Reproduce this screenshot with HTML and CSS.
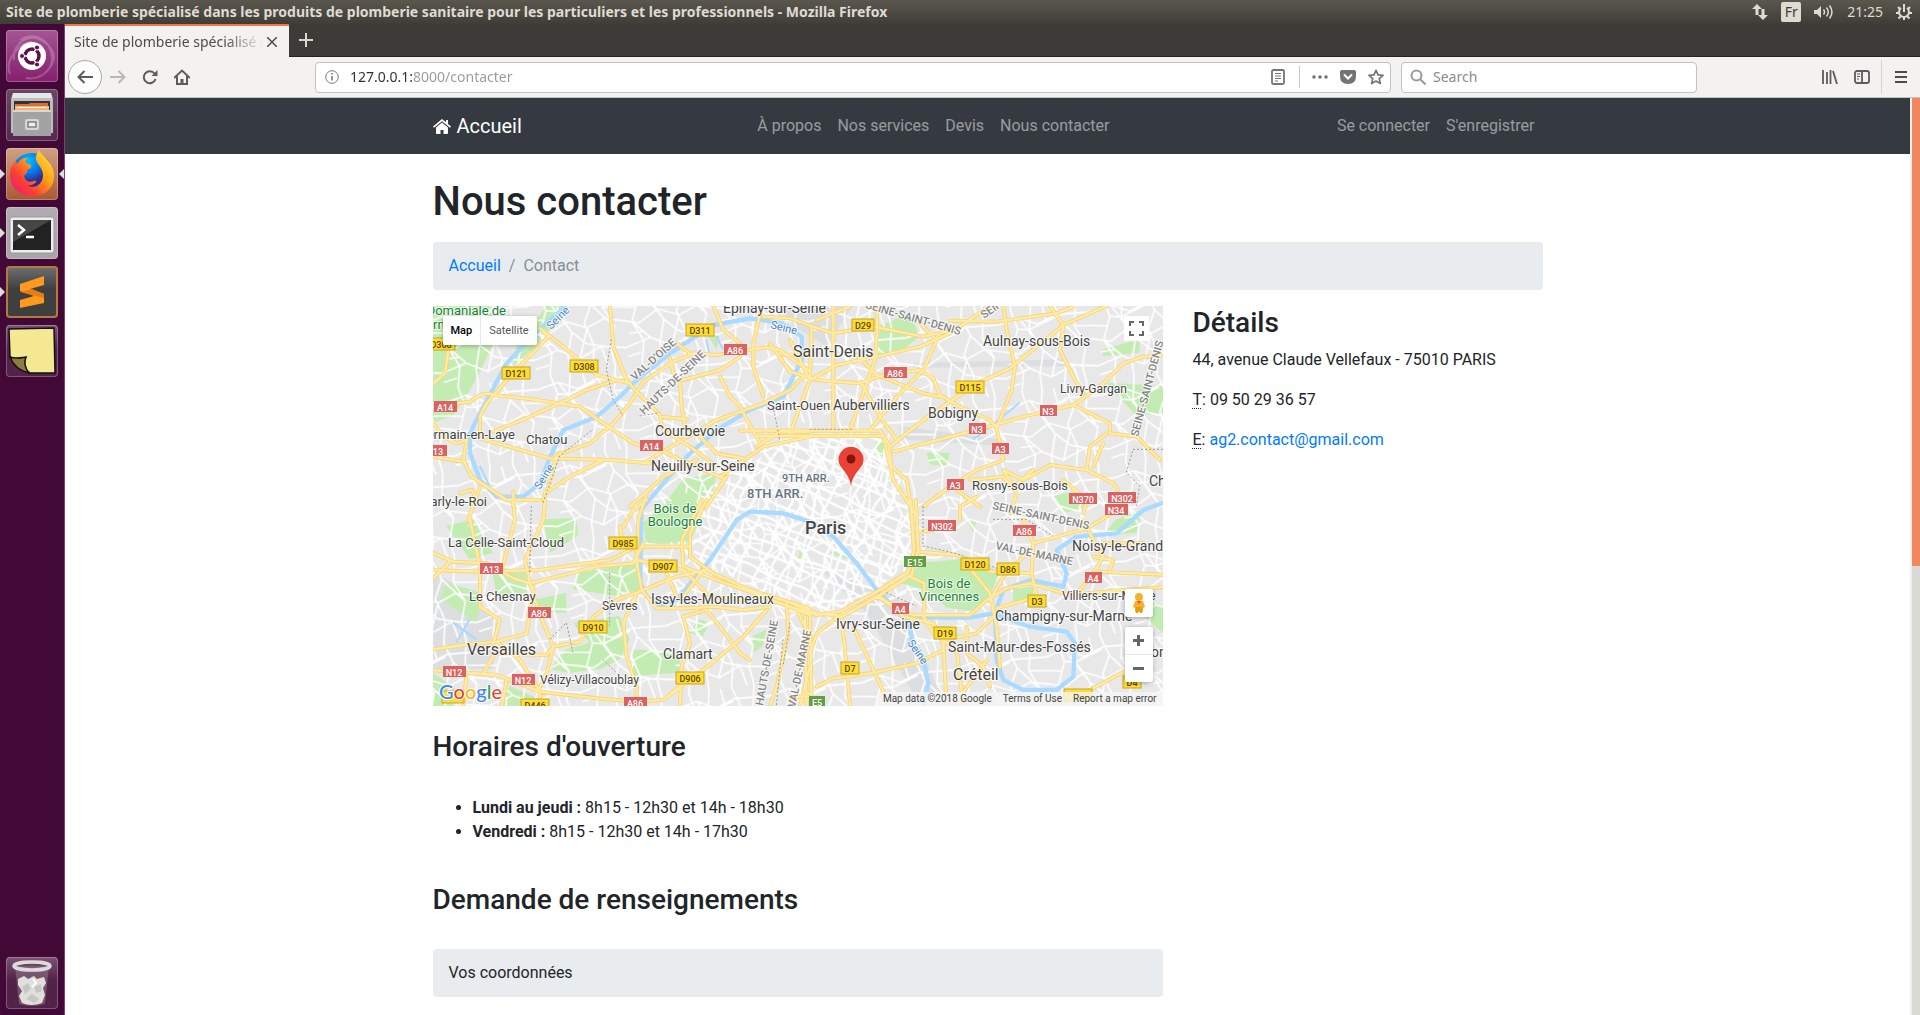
FILE: index.html
```html
<!DOCTYPE html>
<html lang="fr">
<head>
<meta charset="utf-8">
<title>Site de plomberie spécialisé dans les produits de plomberie sanitaire</title>
<link rel="stylesheet" href="styles.css">
</head>
<body>
<div class="desktop">
  <header class="panel">
    <span class="panel-title">Site de plomberie spécialisé dans les produits de plomberie sanitaire pour les particuliers et les professionnels - Mozilla Firefox</span>
    <div class="indicators">
      <svg width="16" height="16" viewBox="0 0 16 16" fill="#dfdbd2"><path d="M5 0l5 5H6.500v6h-3V5H0zM11 16l-5-5h3.500V5h3v6H16z"/></svg>
      <span class="keyboard">Fr</span>
      <svg width="20" height="16" viewBox="0 0 20 16" fill="none" stroke="#dfdbd2" stroke-width="1.500"><path d="M0 6h3l4-4v12l-4-4H0z" fill="#dfdbd2" stroke="none"/><path d="M9.500 5.500q2 2.500 0 5M12.500 3.500q3.500 4.500 0 9M15.500 1.500q5 6.500 0 13"/></svg>
      <span class="clock">21:25</span>
      <svg width="16" height="16" viewBox="0 0 16 16" fill="none" stroke="#dfdbd2" stroke-width="2"><path d="M5 4a5 5 0 1 0 6 0M8 0v8"/><path d="M2 3l2 2M14 3l-2 2M0 9h3M13 9h3M2.500 14.500l2-2M13.500 14.500l-2-2M8 13v3"/></svg>
    </div>
  </header>

  <div class="workspace">
    <nav class="launcher" aria-label="Lanceur">
      <button class="tile tile-dash" aria-label="Rechercher">
        <svg viewBox="0 0 52 52"><g fill="none" stroke="#fff" stroke-opacity=".22" stroke-width="2"><path d="M8 30C6 12 24 2 38 12s12 20 2 30M14 10c16-10 32 2 32 18S30 50 20 48M4 44C-2 30 14 12 26 12"/></g><circle cx="26" cy="26" r="14" fill="#fff"/><circle cx="26" cy="26" r="7" fill="none" stroke="#5e1147" stroke-width="3.500"/><path d="M26 26L14 26M26 26l6-11M26 26l6 11" stroke="#fff" stroke-width="1.500"/><circle cx="26" cy="26" r="5" fill="#fff"/><g fill="#5e1147" stroke="#fff"><circle cx="16" cy="26" r="2.500"/><circle cx="31" cy="17.500" r="2.500"/><circle cx="31" cy="34.500" r="2.500"/></g></svg>
      </button>
      <button class="tile tile-files" aria-label="Fichiers">
        <svg viewBox="0 0 52 52"><path d="M7 4h38l2 6v34H5V10z" fill="#bdbdbd"/><path d="M7 4h38l1 5H6z" fill="#e6e6e6"/><path d="M8 12h36v10H8z" fill="#333"/><path d="M9 15h14l1-1h18v8H9z" fill="#e06a3c"/><path d="M9 17h34v4H9z" fill="#f6b26f"/><path d="M11 18h30v1H11z" fill="#fff"/><path d="M7 21h38v26H7z" fill="#a3a3a3"/><path d="M7 21h38v2H7z" fill="#d8d8d8"/><rect x="19" y="30" width="14" height="11" rx="2" fill="#d6d6d6"/><rect x="22" y="33" width="8" height="5" fill="#eee" stroke="#555"/></svg>
      </button>
      <button class="tile tile-firefox running active" aria-label="Firefox">
        <svg viewBox="0 0 52 52"><defs><linearGradient id="fx" x1="1" y1="0" x2="0" y2="1"><stop offset="0" stop-color="#fff04d"/><stop offset=".4" stop-color="#ffa114"/><stop offset=".7" stop-color="#ff3b36"/><stop offset="1" stop-color="#e31587"/></linearGradient><radialGradient id="globe" cx=".4" cy=".2"><stop offset="0" stop-color="#00c3ff"/><stop offset=".6" stop-color="#0a70e8"/><stop offset="1" stop-color="#322a87"/></radialGradient></defs><circle cx="26" cy="26" r="21" fill="url(#globe)"/><path d="M33 2c2 6 15 11 15 26 0 12-9 20-21 20C14 48 4 40 4 27c0-6 2-11 6-14l1 3c3-5 8-7 11-6-3 2-3 4-2 5l5 2c1 2-1 4-4 5 1 3-2 4-3 6 1 5 5 7 10 5 3-1 3 1 1 2-2 2-5 3-8 2 8 5 16-1 16-10 0-9-9-12-7-19 1-3 2-4 3-6z" fill="url(#fx)"/></svg>
      </button>
      <button class="tile tile-terminal running" aria-label="Terminal">
        <svg viewBox="0 0 52 52"><rect x="4" y="10" width="44" height="36" rx="2" fill="#eee" stroke="#999"/><rect x="7" y="13" width="38" height="30" fill="#222"/><path d="M7 13h38L7 35z" fill="#464646"/><path d="M12 18l6 5-6 5M20 30h8" fill="none" stroke="#fff" stroke-width="2.500"/></svg>
      </button>
      <button class="tile tile-sublime running" aria-label="Sublime Text">
        <svg viewBox="0 0 52 52"><path d="M14 18l24-8v9l-14 4 14 5v9l-24 5v-8l14-4-14-5z" fill="#ff9a1f"/><path d="M14 26l12-3 12 5v4z" fill="#e57d12"/></svg>
      </button>
      <button class="tile tile-glass" aria-label="Notes">
        <svg viewBox="0 0 52 52"><path d="M3 4l45-1 1 45H24L4 32z" fill="#f5e892" stroke="#111" stroke-width="1.500"/><path d="M4 32c5 2 10 1 16 0-2 5-1 11 3 16C14 46 7 40 4 32z" fill="#8c7d3f" stroke="#111" stroke-width="1.500"/></svg>
      </button>
      <button class="tile tile-glass tile-last" aria-label="Corbeille">
        <svg viewBox="0 0 52 52"><path d="M9 9h34l-4 38q-13 4-26 0z" fill="#8d6f86" fill-opacity=".6"/><path d="M12 22l6-3 4 3 6-3 3 3 7-2 2 6-3 5 2 7-3 8q-11 4-20 0l-3-7 3-5-4-6z" fill="#dfe0dc"/><path d="M16 30l6-4 3 6-6 5zM28 30l7-3 1 7-6 2zM20 42l6-5 7 5-4 4z" fill="#c6c7c2"/><path d="M27 22l3 4-4 4" stroke="#fff" stroke-width="2" fill="none"/><ellipse cx="26" cy="9" rx="18" ry="4" fill="none" stroke="#dcdcdc" stroke-width="3.500"/></svg>
      </button>
    </nav>

    <div class="browser">
      <div class="tabs">
        <div class="tab"><span class="tab-title">Site de plomberie spécialisé dans</span><button class="tab-close" aria-label="Fermer"><svg width="10" height="10" viewBox="0 0 10 10" stroke="#4a4a4a" stroke-width="1.500"><path d="M0 0l10 10M10 0L0 10"/></svg></button></div>
        <button class="tab-new" aria-label="Nouvel onglet"><svg width="14" height="14" viewBox="0 0 14 14" stroke="#dad7cf" stroke-width="2"><path d="M7 0v14M0 7h14"/></svg></button>
      </div>
      <div class="toolbar">
        <button class="back" aria-label="Précédent"><svg width="16" height="14" viewBox="0 0 16 14" fill="none" stroke="#5c5c5c" stroke-width="2"><path d="M16 7H1M7.500 1L1.500 7l6 6"/></svg></button>
        <button class="tool" aria-label="Suivant"><svg width="16" height="14" viewBox="0 0 16 14" fill="none" stroke="#b9b8b6" stroke-width="2"><path d="M0 7h15M8.500 1l6 6-6 6"/></svg></button>
        <button class="tool" aria-label="Actualiser"><svg width="16" height="16" viewBox="0 0 16 16" fill="none" stroke="#5c5c5c" stroke-width="2"><path d="M13.500 10A6 6 0 1 1 12.500 4.500"/><path d="M15.500 1v6h-6z" fill="#5c5c5c" stroke="none"/></svg></button>
        <button class="tool" aria-label="Accueil"><svg width="16" height="16" viewBox="0 0 16 16" fill="none" stroke="#5c5c5c" stroke-width="2"><path d="M0 9l8-7.500L16 9M3 7v8h10V7"/><path d="M6.500 15v-5h3v5z" fill="#5c5c5c" stroke="none"/></svg></button>
        <div class="field address">
          <svg width="14" height="14" viewBox="0 0 14 14" fill="none" stroke="#7a7a7a"><circle cx="7" cy="7" r="6.300"/><path d="M7 6v4.500M7 3v1.500" stroke-width="1.600"/></svg>
          <input class="address-input" type="text" value="127.0.0.1:8000/contacter" aria-label="Adresse">
          <button class="tool-in" aria-label="Mode lecture"><svg width="14" height="16" viewBox="0 0 14 16" fill="none" stroke="#747474" stroke-width="1.800"><rect x="1" y="1" width="12" height="14" rx="1.500"/><path d="M4 4.500h6M4 7h6M4 9.500h6M4 12h3" stroke-width="1"/></svg></button>
          <span class="field-rule"></span>
          <button class="tool-in" aria-label="Actions"><svg width="16" height="4" viewBox="0 0 16 4" fill="#747474"><circle cx="2" cy="2" r="1.800"/><circle cx="8" cy="2" r="1.800"/><circle cx="14" cy="2" r="1.800"/></svg></button>
          <button class="tool-in" aria-label="Pocket"><svg width="16" height="14" viewBox="0 0 16 14"><path d="M2 0h12q2 0 2 2v4q0 8-8 8T0 6V2q0-2 2-2z" fill="#747474"/><path d="M4 4.500l4 4 4-4" fill="none" stroke="#fff" stroke-width="2"/></svg></button>
          <button class="tool-in" aria-label="Marque-page"><svg width="16" height="16" viewBox="0 0 16 16" fill="none" stroke="#747474" stroke-width="1.700" stroke-linejoin="round"><path d="M8 1.300l2 4.500 5 .5-3.700 3.300 1 4.900L8 12l-4.300 2.500 1-4.900L1 6.300l5-.5z"/></svg></button>
        </div>
        <div class="field search">
          <svg width="16" height="16" viewBox="0 0 16 16" fill="none" stroke="#9a9a9a" stroke-width="2"><circle cx="6.500" cy="6.500" r="5"/><path d="M10 10l5.500 5.500"/></svg>
          <input class="search-input" type="text" placeholder="Search" aria-label="Search">
        </div>
        <div class="toolbar-end">
          <button class="tool" aria-label="Bibliothèque"><svg width="16" height="14" viewBox="0 0 16 14" stroke="#5c5c5c" stroke-width="1.800"><path d="M1 0v14M5 2v12M8.500 0v14M11 1l4 13"/></svg></button>
          <button class="tool" aria-label="Panneau"><svg width="16" height="14" viewBox="0 0 16 14" fill="none" stroke="#5c5c5c" stroke-width="1.800"><rect x="1" y="1" width="14" height="12" rx="2"/><path d="M8 1v12"/><path d="M3 4h3M3 6.500h3M3 9h2" stroke-width="1"/></svg></button>
          <span class="toolbar-rule"></span>
          <button class="tool menu" aria-label="Menu"><svg width="12" height="12" viewBox="0 0 12 12" stroke="#4c4c4c" stroke-width="2"><path d="M0 1h12M0 6h12M0 11h12"/></svg></button>
        </div>
      </div>

      <div class="viewport">
        <div class="page">
          <nav class="navbar">
            <div class="container navbar-inner">
              <a class="brand" href="#"><svg width="18" height="15" viewBox="0 0 18 15" fill="#fff"><path d="M9 3.500l6 5V14q0 1-1 1h-3.500v-4h-3v4H4q-1 0-1-1V8.500z"/><path d="M9 0L0 7.500l1 1.200L9 2.200l8 6.500 1-1.200-3-2.500V1h-2v2.300z"/></svg><span>Accueil</span></a>
              <ul class="nav nav-main">
                <li><a href="#">À propos</a></li><li><a href="#">Nos services</a></li><li><a href="#">Devis</a></li><li><a href="#">Nous contacter</a></li>
              </ul>
              <ul class="nav">
                <li><a href="#">Se connecter</a></li><li><a href="#">S'enregistrer</a></li>
              </ul>
            </div>
          </nav>

          <main class="container">
            <h1>Nous contacter</h1>
            <ol class="breadcrumb"><li><a href="#">Accueil</a></li><li class="current">Contact</li></ol>
            <div class="row">
              <div class="col-main">
                <div class="map">
                  <svg class="map-canvas" viewBox="0 0 730 400" preserveAspectRatio="xMidYMid slice" role="img" aria-label="Paris">
                    <defs>
                      <pattern id="streets" width="410" height="370" patternUnits="userSpaceOnUse" patternTransform="rotate(-8) scale(.68)">
                        <path d="M0 60L90 40 170 80 260 50 410 60M0 180L70 200 160 150 250 190 330 160 410 180M0 300L110 270 200 320 300 280 410 300M60 0L80 90 40 190 80 280 60 370M150 0L130 100 180 200 150 300 150 370M250 0L280 90 240 170 270 270 250 370M350 0L330 110 370 200 340 290 350 370M90 40L180 200M280 90L370 200M110 270L40 190M200 320L250 190M80 90L130 100 250 60M180 200L240 260 340 290M0 120L60 130M330 110L410 120M300 280L320 370M200 0L210 70M20 240L80 240M0 340L60 330"/>
                      </pattern>
                      <pattern id="city" width="170" height="150" patternUnits="userSpaceOnUse" patternTransform="rotate(24)">
                        <path d="M0 20L60 30 170 20M0 55L80 50 170 55M0 90L50 85 120 100 170 90M0 125L90 120 170 125M25 0L20 60 35 100 25 150M60 0L65 80 55 150M95 0L90 50 105 110 95 150M135 0L130 90 140 120 135 150M20 60L90 120M90 50L150 90M60 30L25 0M105 110L150 150"/>
                      </pattern>
                      <g id="roads">
                        <g transform="translate(-9 -18)"><path d="M0 320L120 305C145 285 165 275 190 285L300 297 450 320 520 370 610 430 700 455 820 510 880 535M1140 215L1050 150 1010 142 860 165 790 160 730 185 640 245 600 310 550 370 480 430 380 465 365 530 340 600 345 620M540 18L550 140 590 240 615 270 690 345 695 380M330 85L400 140 500 225 600 250M330 85L355 110 240 230 170 310 150 350 150 400M9 370L40 410 80 430 110 420 100 480 125 530 230 600 330 600M9 470L100 485M150 415L360 475 540 480 660 490M190 395L300 350 400 305 470 270 560 240M345 580L420 530 520 480M720 175L730 220 750 250 755 320 765 380M690 350L770 358M765 380L800 400 860 460 940 475M850 18L880 90 930 130M995 18L970 130 970 200 1000 290M760 240L870 210 930 170M870 230L900 290 930 320 990 430M640 490L740 430 860 360 1000 310 1080 270 1130 220M800 480L700 530 600 620M890 530L870 560 830 620M870 530L1000 440 1140 410M980 440L1050 395 1140 395M700 390L780 440 860 500M9 250L45 220 55 150M90 580L125 570 140 600M250 575L250 620M740 130L780 160M1140 160L1060 165"/></g>
                        <g transform="translate(1071 -18)"><path d="M-80 50L0 55 70 80 130 100 250 80 400 110 470 95M-60 130L0 215 80 240 210 250 280 225 390 210 430 235 450 285 500 315 600 360 620 385M60 240L140 195 260 170 390 140 480 100 600 18M480 62L620 65 800 40 850 20M130 18L130 390M65 80L60 240 0 400M260 18L262 80 255 180 180 390M200 165L260 225 400 280 450 290M380 60L440 120 400 210 330 280 240 390M215 250L270 350 320 420M640 18L650 90 675 200 665 270 620 385 640 480 560 510 480 560 400 620M480 305L560 250 660 205M310 455L560 390 700 350 850 315 930 260 1000 190 1060 170 1140 165M300 440L400 360 480 305M850 315L960 370 960 400 1040 410 1110 480M950 400L900 440 890 510 780 495 700 540 640 510M940 430L910 500M890 510L970 550 1010 620M820 540L890 600 880 640M660 205L820 75 950 18M780 18L820 75 810 150 850 230 880 280M-150 392L270 392 295 430 305 500 350 540 365 640M-100 408L280 408 310 540 375 640M540 540L640 530 680 580 660 640M500 570L570 620M640 510L670 560 730 510M0 120L60 240M80 60L180 20"/></g>
                        <g transform="translate(-9 582)"><path d="M0 155L70 185 170 190 250 235 300 250 500 200 610 190 640 130M0 245L60 185M9 210L150 215 330 210 540 180 600 150M120 60L150 200 150 320 210 360 190 430M150 -40L115 60M250 0L255 60 215 210M345 0L340 60 285 180 300 250 315 300 340 370 370 440 350 520 325 570M0 450L100 435 200 425 270 480 330 575M190 460L350 465 370 440M200 425L290 400 310 260M0 510L200 525 330 575 500 595 620 605 700 600 760 550M370 440L450 425 490 350 560 300 640 270 740 230 830 210M650 -20L625 60 620 190 635 270 680 325 770 325 850 320M620 180L760 210 840 290 950 300M710 220L740 290M830 0L780 100 780 170 850 220 960 270 1140 325M815 0L755 120 760 200 860 240 1000 290 1140 345M780 140L640 140M610 300L580 370 590 470 620 560 620 618M620 280L610 310M760 350L830 330 870 380 930 460 960 480M760 350L780 430 755 500 750 618M1010 330L940 410 820 510 700 600M1070 310L1075 400 1040 560 1020 618M1100 330L1120 370 1140 400M110 520L100 618M160 520L190 470M230 540L215 618M330 575L330 618M580 80L610 30 650 0M570 80L580 140 620 150M820 210L760 290M850 320L940 330 1020 320M1140 500L1110 618"/></g>
                        <g transform="translate(1071 582)"><path d="M362 0L372 150 355 215 260 275 150 335 80 345 0 320M377 0L385 150 365 225 270 285 160 348 80 340 0 308M260 290L370 345 540 345 590 300 650 265 720 250 840 285 1000 270 1140 260M360 230L403 250 403 350M385 155L500 165 600 215 720 220M390 95L430 90M510 60L510 20 560 -10M700 60L730 130 725 220 740 290M730 130L890 85 1000 20M880 60L910 120 940 170 910 220 870 270M930 215L1140 225M910 170L970 180 960 210M940 130L1060 130M540 205L600 280 620 380 630 500M600 300L640 230 720 150M620 325L740 290M270 290L340 350 430 370 460 430 470 618M400 350L430 400 500 450 520 618M460 420L560 400 610 350M80 560L130 535 240 520 380 490 460 450M60 340L65 618M45 350L50 618M155 350L170 500 180 618M190 380L250 510 300 618M150 345L80 400 60 460M0 600L60 580M530 380L530 460 580 500 600 560M590 480L490 618M800 618L900 570 1000 515 1060 540"/></g>
                      </g>
                    </defs>
                    <g transform="scale(.33333)">
                      <rect class="land" width="2190" height="1200"/>
                      <g class="airfield"><path d="M0 800L60 830 150 900 200 960 180 1090 0 1090z"/><path d="M1040 0L1260 0 1180 120 1080 60zM1440 170L1900 160 1900 180 1440 185zM1400 360L1700 400 1700 420 1400 400zM1150 780L1400 880 1520 1160 1440 1160 1300 920z"/></g>
                      <g class="park">
                        <path d="M0 0H170L190 90 140 200 100 270 60 330 0 350zM340 0H410L300 130 240 180 250 120z"/>
                        <path d="M1340 60L1430 20 1460 90 1400 140 1335 145zM2010 130L2120 100 2120 140 2010 150zM2020 230L2190 240 2190 320 2110 330zM1480 440L1550 440 1540 480 1490 475zM1330 400L1370 410 1370 460 1325 440zM1850 570L1910 560 1960 600 1900 620zM2050 640L2130 610 2110 680 2010 690z"/>
                        <path d="M750 520L850 500 840 560 820 600 770 710 640 715 630 650 690 600zM330 640L430 635 435 690 350 740zM40 660L120 640 180 740 110 760zM440 800L610 770 620 850 550 870 420 850zM180 800L280 800 280 860 190 870zM40 830L150 860 130 950 20 880zM310 880L400 860 400 920 320 920zM420 950L560 930 590 1000 560 1060 500 1090 410 1100 350 1090 400 1030 470 1010zM600 1030L740 1040 740 1100 600 1110zM0 1100L70 1150 60 1200 0 1200zM230 1140L320 1180 310 1200 200 1200zM800 940L830 950 810 990 765 980zM960 990L1000 970 990 1020 960 1040z"/>
                        <path d="M2150 880L2190 900V980L2140 940zM1100 730L1120 720 1120 760 1095 760zM1600 640L1630 645 1620 680zM820 80L860 90 850 130zM1190 740L1230 730 1240 760z"/>
                      </g>
                      <rect width="2190" height="1200" fill="url(#streets)"/>
                      <path d="M800 560L960 470 1080 390 1340 390 1420 560 1440 760 1320 860 1200 920 1000 860 780 760z" fill="url(#city)"/>
                      <path class="park" d="M1470 770L1620 755 1700 800 1660 890 1610 915 1540 905 1500 860 1400 830zM1740 850L1800 840 1800 890 1740 890zM690 600L760 560 800 600 765 705 645 712 640 650z"/>
                      <g class="water">
                        <path d="M400 0L311 77 221 172 141 322 111 382 111 442 141 522 191 572 271 572 321 532 351 452 391 372 491 332 561 272 611 222 711 142 841 57 951 37 1051 52 1106 92 1106 162 1051 272 951 312 851 372 761 452 691 532 625 610 622 830 640 870 681 897 731 882 831 762 911 642 951 617 1051 622 1140 650 1201 692 1271 772 1331 852 1401 922 1430 960 1440 1020 1471 1062 1486 1132 1471 1200"/>
                        <path d="M1421 935L1611 935 1680 922 1790 962 1901 977 1926 1012 1921 1112 1871 1152 1771 1152 1711 1122 1691 1062 1686 922 1711 852 1791 822 1891 842 1901 802 1871 732 1931 692 2051 682 2131 612 2190 590"/>
                        <path class="thin" d="M60 950L130 1000M110 940L70 1010M820 100L830 150M850 90L870 130M1620 400L1700 340 1760 290M140 480L170 540"/>
                      </g>
                      <use href="#roads" class="road-edge"/>
                      <use href="#roads" class="road-fill"/>
                      <path class="border" d="M535 100L520 190 540 280 570 330M330 590L380 450 480 370M620 330L680 320M1130 370L1260 370M1020 300L1040 400M1470 600L1470 720 1560 740 1700 790M1680 640L1780 640 1860 690M2190 430L2100 430 2080 500 2120 540 2110 600M295 600L290 800M530 800L530 960M350 1000L400 950 420 1040M510 1060L560 1110M1050 1000L1030 1200M1071 950L1050 1080M1360 860L1450 900"/>
                    </g>
                    <g class="town">
                      <text class="t14" x="290" y="7">Epinay-sur-Seine</text><text class="t13" x="93" y="138">Chatou</text><text class="t14" x="222" y="130">Courbevoie</text><text class="t14" x="218" y="165">Neuilly-sur-Seine</text><text class="t13" x="82" y="133" text-anchor="end">Saint-Germain-en-Laye</text><text class="t13" x="54" y="200" text-anchor="end">Marly-le-Roi</text><text class="t13" x="334" y="104">Saint-Ouen</text><text class="t14" x="400" y="104">Aubervilliers</text><text class="t16" x="360" y="51">Saint-Denis</text><text class="t14" x="550" y="40">Aulnay-sous-Bois</text><text class="t12" x="627" y="87">Livry-Gargan</text><text class="t14" x="495" y="112">Bobigny</text><text class="t13" x="539" y="184">Rosny-sous-Bois</text><text class="t14" x="716" y="180">Chelles</text><text class="t13" x="15" y="241">La Celle-Saint-Cloud</text><text class="t13" x="36" y="295">Le Chesnay</text><text class="t12" x="169" y="304">Sèvres</text><text class="t14" x="218" y="298">Issy-les-Moulineaux</text><text class="t16" x="34" y="349">Versailles</text><text class="t12" x="107" y="378">Vélizy-Villacoublay</text><text class="t14" x="230" y="353">Clamart</text><text class="t18" x="372" y="228">Paris</text><text class="t14" x="403" y="323">Ivry-sur-Seine</text><text class="t14" x="515" y="346">Saint-Maur-des-Fossés</text><text class="t16" x="520" y="374">Créteil</text><text class="t14" x="562" y="315">Champigny-sur-Marne</text><text class="t12" x="629" y="294">Villiers-sur-Marne</text><text class="t14" x="639" y="245">Noisy-le-Grand</text><text class="t14" x="718" y="351">on</text>
                    </g>
                    <g class="district"><text x="349" y="176" class="t11">9TH ARR.</text><text x="314" y="192" class="t13">8TH ARR.</text></g>
                    <g class="green"><text x="73" y="9" text-anchor="end">Domaniale de</text><text x="0" y="23">rm</text><text x="242" y="207" text-anchor="middle">Bois de</text><text x="242" y="220" text-anchor="middle">Boulogne</text><text x="516" y="282" text-anchor="middle">Bois de</text><text x="516" y="295" text-anchor="middle">Vincennes</text></g>
                    <g class="river"><text transform="translate(118 24) rotate(-45)">Seine</text><text transform="translate(337 22) rotate(14)">Seine</text><text transform="translate(107 184) rotate(-58)">Seine</text><text transform="translate(474 337) rotate(55)">Seine</text></g>
                    <g class="region"><text transform="translate(202 75) rotate(-42)">VAL-D'OISE</text><text transform="translate(211 109) rotate(-44)">HAUTS-DE-SEINE</text><text transform="translate(432 2) rotate(16)">SEINE-SAINT-DENIS</text><text transform="translate(551 13) rotate(-35)">SEINE-ST</text><text transform="translate(705 131) rotate(-75)">SEINE-SAINT-DENIS</text><text transform="translate(559 203) rotate(12)">SEINE-SAINT-DENIS</text><text transform="translate(562 243) rotate(12)">VAL-DE-MARNE</text><text transform="translate(330 400) rotate(-80)">HAUTS-DE-SEINE</text><text transform="translate(362 402) rotate(-78)">VAL-DE-MARNE</text></g>
                    <g class="shield yellow">
                      <g transform="translate(267 24)"><rect x="-14" y="-6" width="28" height="12"/><text y="4">D311</text></g><g transform="translate(151 60)"><rect x="-14" y="-6" width="28" height="12"/><text y="4">D308</text></g><g transform="translate(83 67)"><rect x="-14" y="-6" width="28" height="12"/><text y="4">D121</text></g><g transform="translate(8 38)"><rect x="-14" y="-6" width="28" height="12"/><text y="4">D308</text></g><g transform="translate(430 19)"><rect x="-11" y="-6" width="22" height="12"/><text y="4">D29</text></g><g transform="translate(537 81)"><rect x="-14" y="-6" width="28" height="12"/><text y="4">D115</text></g><g transform="translate(190 237)"><rect x="-14" y="-6" width="28" height="12"/><text y="4">D985</text></g><g transform="translate(230 260)"><rect x="-14" y="-6" width="28" height="12"/><text y="4">D907</text></g><g transform="translate(160 321)"><rect x="-14" y="-6" width="28" height="12"/><text y="4">D910</text></g><g transform="translate(257 372)"><rect x="-14" y="-6" width="28" height="12"/><text y="4">D906</text></g><g transform="translate(102 399)"><rect x="-14" y="-6" width="28" height="12"/><text y="4">D446</text></g><g transform="translate(20 391)"><rect x="-11" y="-6" width="22" height="12"/></g><g transform="translate(542 258)"><rect x="-14" y="-6" width="28" height="12"/><text y="4">D120</text></g><g transform="translate(575 263)"><rect x="-11" y="-6" width="22" height="12"/><text y="4">D86</text></g><g transform="translate(604 295)"><rect x="-9" y="-6" width="18" height="12"/><text y="4">D3</text></g><g transform="translate(512 327)"><rect x="-11" y="-6" width="22" height="12"/><text y="4">D19</text></g><g transform="translate(417 362)"><rect x="-9" y="-6" width="18" height="12"/><text y="4">D7</text></g><g transform="translate(699 376)"><rect x="-9" y="-6" width="18" height="12"/><text y="4">D4</text></g><g transform="translate(645 389)"><rect x="-14" y="-6" width="28" height="12"/></g>
                    </g>
                    <g class="shield red">
                      <g transform="translate(302 44)"><rect x="-11" y="-6" width="23" height="11"/><text y="4">A86</text></g><g transform="translate(12 101)"><rect x="-11" y="-6" width="23" height="11"/><text y="4">A14</text></g><g transform="translate(218 140)"><rect x="-11" y="-6" width="23" height="11"/><text y="4">A14</text></g><g transform="translate(2 145)"><rect x="-11" y="-6" width="23" height="11"/><text y="4">A13</text></g><g transform="translate(462 67)"><rect x="-11" y="-6" width="23" height="11"/><text y="4">A86</text></g><g transform="translate(615 105)"><rect x="-8" y="-6" width="17" height="11"/><text y="4">N3</text></g><g transform="translate(544 123)"><rect x="-8" y="-6" width="17" height="11"/><text y="4">N3</text></g><g transform="translate(567 143)"><rect x="-8" y="-6" width="17" height="11"/><text y="4">A3</text></g><g transform="translate(522 179)"><rect x="-8" y="-6" width="17" height="11"/><text y="4">A3</text></g><g transform="translate(650 193)"><rect x="-14" y="-6" width="28" height="11"/><text y="4">N370</text></g><g transform="translate(689 192)"><rect x="-14" y="-6" width="28" height="11"/><text y="4">N302</text></g><g transform="translate(683 204)"><rect x="-11" y="-6" width="23" height="11"/><text y="4">N34</text></g><g transform="translate(58 263)"><rect x="-11" y="-6" width="23" height="11"/><text y="4">A13</text></g><g transform="translate(106 307)"><rect x="-11" y="-6" width="23" height="11"/><text y="4">A86</text></g><g transform="translate(21 366)"><rect x="-11" y="-6" width="23" height="11"/><text y="4">N12</text></g><g transform="translate(90 374)"><rect x="-11" y="-6" width="23" height="11"/><text y="4">N12</text></g><g transform="translate(202 397)"><rect x="-11" y="-6" width="23" height="11"/><text y="4">A86</text></g><g transform="translate(509 220)"><rect x="-14" y="-6" width="28" height="11"/><text y="4">N302</text></g><g transform="translate(591 225)"><rect x="-11" y="-6" width="23" height="11"/><text y="4">A86</text></g><g transform="translate(660 272)"><rect x="-8" y="-6" width="17" height="11"/><text y="4">A4</text></g><g transform="translate(467 303)"><rect x="-8" y="-6" width="17" height="11"/><text y="4">A4</text></g>
                    </g>
                    <g class="shield euro"><g transform="translate(482 256)"><rect x="-11" y="-6" width="22" height="11"/><text y="4">E15</text></g><g transform="translate(384 396)"><rect x="-8" y="-6" width="16" height="11"/><text y="4">E5</text></g></g>
                    <path d="M418 181c-1-10-5-13-9-19a12.500 12.500 0 1 1 18 0c-4 6-8 9-9 19z" fill="#ea4335"/><circle cx="418" cy="153" r="4.500" fill="#811411"/>
                    <text class="google" x="6" y="393"><tspan fill="#4285f4">G</tspan><tspan fill="#ea4335">o</tspan><tspan fill="#fbbc05">o</tspan><tspan fill="#4285f4">g</tspan><tspan fill="#34a853">l</tspan><tspan fill="#ea4335">e</tspan></text>
                  </svg>
                  <div class="map-types"><button class="selected">Map</button><button>Satellite</button></div>
                  <button class="map-full" aria-label="Plein écran"><svg width="15" height="15" viewBox="0 0 15 15" fill="none" stroke="#666" stroke-width="2"><path d="M1 5V1h4M10 1h4v4M14 10v4h-4M5 14H1v-4"/></svg></button>
                  <div class="map-side">
                    <button class="pegman" aria-label="Street View"><svg width="12" height="20" viewBox="0 0 12 20"><path d="M2 8h8l2 6-2 1v4H2v-4l-2-1z" fill="#f5b228"/><path d="M3 14h6v6H7l-1-4-1 4H3z" fill="#e59b17"/><path d="M4 8h4l-2 3z" fill="#d3593a"/><circle cx="6" cy="4" r="4" fill="#f5b228"/></svg></button>
                    <div class="zoom"><button aria-label="Zoom avant"><svg width="11" height="11" viewBox="0 0 11 11" stroke="#666" stroke-width="3"><path d="M5.500 0v11M0 5.500h11"/></svg></button><button aria-label="Zoom arrière"><svg width="11" height="11" viewBox="0 0 11 11" stroke="#666" stroke-width="3"><path d="M0 5.500h11"/></svg></button></div>
                  </div>
                  <div class="map-legal"><span>Map data ©2018 Google</span><a href="#">Terms of Use</a><a href="#">Report a map error</a></div>
                </div>
                <h3 class="spaced">Horaires d'ouverture</h3>
                <ul class="hours"><li><strong>Lundi au jeudi :</strong> 8h15 - 12h30 et 14h - 18h30</li><li><strong>Vendredi :</strong> 8h15 - 12h30 et 14h - 17h30</li></ul>
                <h3 class="spaced">Demande de renseignements</h3>
                <div class="strip">Vos coordonnées</div>
              </div>
              <div class="col-side">
                <h3>Détails</h3>
                <p>44, avenue Claude Vellefaux - 75010 PARIS</p>
                <p><abbr title="Téléphone">T</abbr>: 09 50 29 36 57</p>
                <p><abbr title="Email">E</abbr>: <a href="mailto:ag2.contact@gmail.com">ag2.contact@gmail.com</a></p>
              </div>
            </div>
          </main>
        </div>
        <div class="scrollbar"><div class="thumb"></div></div>
      </div>
    </div>
  </div>
</div>
</body>
</html>
```
FILE: styles.css
```css
*, *::before, *::after { box-sizing: border-box; }
body { margin: 0; font: 16px/24px Roboto, sans-serif; color: #212529; background: #fff; }
button { border: 0; padding: 0; margin: 0; background: none; font: inherit; color: inherit; display: flex; align-items: center; justify-content: center; }
a { color: #007bff; text-decoration: none; }
ul, ol { margin: 0; padding: 0; }
svg { display: block; flex: none; }

.desktop { height: 100vh; display: flex; flex-direction: column; overflow: hidden; }
.workspace { flex: 1; display: flex; min-height: 0; }

/* Top panel */
.panel { height: 24px; flex: none; display: flex; justify-content: space-between; align-items: center; padding: 0 8px 0 6px; background: linear-gradient(#5a574d, #3e3d38); color: #dfdbd2; font: 14px/22px "Noto Sans", sans-serif; }
.panel-title { font-weight: 700; white-space: nowrap; }
.indicators { display: flex; align-items: center; gap: 13px; }
.keyboard { width: 20px; height: 20px; line-height: 20px; border-radius: 2px; background: #dfdbd2; color: #3c3b37; text-align: center; }

/* Launcher */
.launcher { width: 65px; flex: none; display: flex; flex-direction: column; align-items: center; gap: 7px; padding: 6px 0; background: #420936; border-right: 1px solid #7a4470; }
.tile { width: 52px; height: 52px; flex: none; position: relative; border-radius: 4px; box-shadow: inset 0 0 0 1px rgba(255,255,255,.25); }
.tile svg { width: 52px; height: 52px; }
.tile-dash { background: linear-gradient(#a45593, #861f6e); }
.tile-files { background: linear-gradient(#6b4763, #57284e); }
.tile-firefox { background: linear-gradient(#d0a184, #a95a36); }
.tile-terminal { background: linear-gradient(#b2acb3, #a9a2aa); }
.tile-sublime { background: linear-gradient(#707070, #3f3f3f 45%); box-shadow: inset 0 0 0 2px #b27a3f; }
.tile-glass { background: linear-gradient(#7c5273, #522249 45%); }
.tile-last { margin-top: auto; }
.running::before, .active::after { content: ""; position: absolute; top: 21px; border: 5px solid transparent; }
.running::before { left: -6px; border-left-color: #ddd; border-right-width: 0; }
.active::after { right: -6px; border-right-color: #ddd; border-left-width: 0; }

/* Browser chrome */
.browser { flex: 1; min-width: 0; display: flex; flex-direction: column; font-family: "Noto Sans", sans-serif; }
.tabs { height: 33px; flex: none; display: flex; background: #3c3b37; border-bottom: 1px solid #252420; }
.tab { width: 224px; height: 33px; display: flex; align-items: center; padding: 0 12px 0 9px; background: #f3f2f1; border-top: 2px solid #f07746; font-size: 14px; line-height: 22px; color: #4c4c4c; }
.tab-title { flex: 1; overflow: hidden; white-space: nowrap; -webkit-mask-image: linear-gradient(90deg, #000 150px, transparent 190px); mask-image: linear-gradient(90deg, #000 150px, transparent 190px); }
.tab-close { width: 10px; margin-left: 5px; }
.tab-new { width: 34px; }
.toolbar { height: 41px; flex: none; display: flex; align-items: center; padding: 0 8px 0 3px; background: #f3f2f1; border-bottom: 1px solid #c4c3c1; }
.back { width: 34px; height: 34px; border: 1px solid #aaa; border-radius: 50%; background: #fdfdfd; }
.tool { width: 32px; height: 32px; }
.field { height: 31px; display: flex; align-items: center; background: #fff; border: 1px solid #c3c2c0; border-radius: 4px; font-size: 14px; }
.field input { border: 0; outline: 0; padding: 0; min-width: 0; flex: 1; height: 24px; font: inherit; background: none; }
.address { flex: 1; margin-left: 117px; padding: 0 6px 0 9px; }
.field .address-input { margin-left: 11px; color: transparent; background: linear-gradient(90deg, #2e2e2e 62px, #999 62px); -webkit-background-clip: text; background-clip: text; }
.tool-in { width: 16px; height: 24px; margin-left: 12px; }
.field-rule { width: 1px; height: 22px; margin-left: 13px; background: #c8c7c5; }
.search { width: 296px; margin-left: 10px; padding: 0 8px; gap: 7px; }
.search-input::placeholder { color: #8b8b8b; opacity: 1; }
.toolbar-end { display: flex; align-items: center; margin-left: 117px; }
.toolbar-rule { width: 1px; height: 34px; margin-left: 3px; background: #d5d3d0; }
.menu { width: 30px; margin-left: 4px; margin-right: -4px; }

/* Site */
.viewport { flex: 1; min-height: 0; display: flex; background: #fff; font-family: Roboto, sans-serif; }
.page { flex: 1; min-width: 0; overflow: hidden; }
.scrollbar { width: 10px; background: #dcdad7; border-left: 2px solid #eee; }
.thumb { height: 51%; background: #f0875f; }
.container { width: 100%; max-width: 1140px; margin: 0 auto; padding: 0 15px; }
.navbar { background: #343a40; padding: 8px 0; }
.navbar-inner { height: 40px; display: flex; align-items: center; }
.brand { display: flex; align-items: center; gap: 6px; margin-right: 16px; color: #fff; font-size: 20px; line-height: 30px; }
.nav { display: flex; list-style: none; }
.nav a { display: block; padding: 8px; color: rgba(255,255,255,.5); }
.nav-main { margin: 0 auto; }

h1, h3 { margin: 0; font-weight: 500; }
h1 { font-size: 40px; line-height: 48px; margin: 24px 0 16px; }
h3 { font-size: 28px; line-height: 34px; margin-bottom: 8px; }
p { margin: 0 0 16px; }
.breadcrumb { display: flex; list-style: none; padding: 12px 16px; margin-bottom: 16px; background: #e9ecef; border-radius: 4px; }
.current { color: #868e96; }
.current::before { content: "/"; padding: 0 8px; }
.row { display: flex; gap: 30px; }
.col-main { flex: 2 1 30px; min-width: 0; }
.col-side { flex: 1 1 0px; min-width: 0; }
.spaced { margin: 24px 0 32px; }
.hours { padding-left: 40px; margin-bottom: 39px; }
.strip { padding: 12px 16px; background: #e9ecef; border-radius: 4px; }
abbr { text-decoration: underline dotted 1px; text-decoration-skip-ink: none; text-underline-offset: 3px; }

/* Map */
.map { position: relative; height: 400px; overflow: hidden; background: #e8e8e8; }
.map-canvas { width: 100%; height: 100%; }
.land { fill: #e8e8e8; }
.airfield { fill: #dcdee0; }
.park { fill: #c3ecb2; }
.map-canvas pattern path { fill: none; stroke: #fff; stroke-width: 7; }
.water path { fill: none; stroke: #aadaff; stroke-width: 13; stroke-linejoin: round; }
.water .thin { stroke-width: 6; }
.road-edge, .road-fill { fill: none; stroke-linejoin: round; stroke-linecap: round; }
.road-edge { stroke: #f8d477; stroke-width: 12; }
.road-fill { stroke: #ffeba3; stroke-width: 7; }
.border { fill: none; stroke: #999; stroke-width: 3; stroke-dasharray: 6 6; }
.map-canvas text { font-family: Roboto, sans-serif; paint-order: stroke; stroke: #fff; stroke-opacity: .75; stroke-width: 2px; stroke-linejoin: round; }
.town { fill: #444; }
.t11 { font-size: 11px; }
.t12 { font-size: 12px; }
.t13 { font-size: 13px; }
.t14 { font-size: 14px; }
.t16 { font-size: 16px; }
.t18 { font-size: 18px; font-weight: 500; }
.district { fill: #667282; font-weight: 500; }
.green { fill: #188038; font-size: 13px; }
.river { fill: #4a86c8; font-size: 11px; }
.region { fill: #858585; font-size: 11px; font-weight: 500; }
.map-canvas .shield text { font-size: 9px; font-weight: 500; text-anchor: middle; stroke: none; }
.yellow rect { fill: #ffdd38; stroke: #c8a41c; }
.yellow text { fill: #5c4600; }
.red rect { fill: #db6262; }
.euro rect { fill: #639e42; }
.red text, .euro text { fill: #fff; }
.map-canvas .google { font: 500 20px Lato, sans-serif; stroke-opacity: 1; }
.map-types, .map-full, .map-side { position: absolute; }
.map-types { left: 10px; top: 10px; display: flex; height: 29px; background: #fff; border-radius: 2px; box-shadow: 0 1px 4px rgba(0,0,0,.3); font-size: 11px; color: #565656; }
.map-types button { padding: 0 8px; }
.map-types .selected { color: #000; font-weight: 500; border-right: 1px solid #e6e6e6; }
.map-full { right: 14px; top: 10px; width: 25px; height: 25px; background: #fff; }
.map-side { right: 10px; bottom: 24px; display: grid; gap: 10px; }
.pegman, .zoom { width: 28px; background: #fff; border-radius: 2px; box-shadow: 0 1px 4px rgba(0,0,0,.3); }
.pegman { height: 28px; }
.zoom button { width: 28px; height: 27px; }
.zoom button + button { border-top: 1px solid #e6e6e6; height: 28px; }
.map-legal { position: absolute; right: 0; bottom: 0; display: flex; gap: 11px; height: 14px; padding: 0 6px; background: rgba(245,245,245,.8); font-size: 10px; line-height: 14px; color: #444; white-space: nowrap; }
.map-legal a { color: #444; }
```
